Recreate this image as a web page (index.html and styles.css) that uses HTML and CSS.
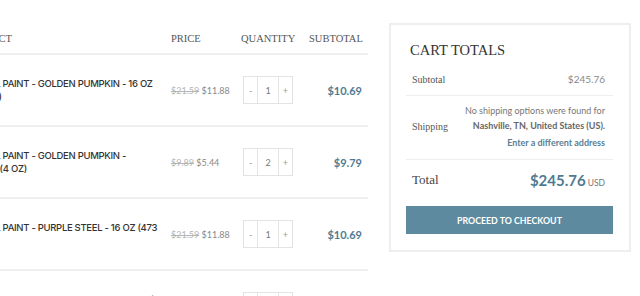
FILE: index.html
```html
<!DOCTYPE html>
<html lang="en">
<head>
    <meta charset="UTF-8">
    <meta name="viewport" content="width=device-width, initial-scale=1.0">
    <title>Cart</title>
    <link rel="stylesheet" href="styles.css">
</head>
<body>
    <div class="page">
        <!-- Cart items -->
        <div class="cart">
            <div class="cart-row cart-head">
                <div>Product</div>
                <div>Price</div>
                <div>Quantity</div>
                <div class="right">Subtotal</div>
            </div>

            <div class="cart-row">
                <div class="name">MINERAL PAINT - GOLDEN PUMPKIN - 16 OZ<br>(473 ML)</div>
                <div class="price"><del>$21.59</del> $11.88</div>
                <div><div class="qty"><span>-</span><span class="num">1</span><span>+</span></div></div>
                <div class="sub right">$10.69</div>
            </div>

            <div class="cart-row">
                <div class="name">MINERAL PAINT - GOLDEN PUMPKIN -<br>TESTER (4 OZ)</div>
                <div class="price"><del>$9.89</del> $5.44</div>
                <div><div class="qty"><span>-</span><span class="num">2</span><span>+</span></div></div>
                <div class="sub right">$9.79</div>
            </div>

            <div class="cart-row">
                <div class="name">MINERAL PAINT - PURPLE STEEL - 16 OZ (473<br>ML)</div>
                <div class="price"><del>$21.59</del> $11.88</div>
                <div><div class="qty"><span>-</span><span class="num">1</span><span>+</span></div></div>
                <div class="sub right">$10.69</div>
            </div>

            <div class="cart-row">
                <div class="name">MINERAL PAINT - PURPLE STEEL - SAMPLE (4<br>OZ)</div>
                <div class="price"><del>$9.89</del> $5.44</div>
                <div><div class="qty"><span>-</span><span class="num">1</span><span>+</span></div></div>
                <div class="sub right">$5.44</div>
            </div>
        </div>

        <!-- Cart totals -->
        <div class="totals">
            <h2>Cart Totals</h2>
            <div class="t-row">
                <div class="label">Subtotal</div>
                <div class="value">$245.76</div>
            </div>
            <div class="t-row shipping">
                <div class="label">Shipping</div>
                <div class="value">
                    <div>No shipping options were found for</div>
                    <div><strong>Nashville, TN, United States (US).</strong></div>
                    <a href="#" class="change">Enter a different address</a>
                </div>
            </div>
            <div class="t-row total">
                <div class="label">Total</div>
                <div class="value"><span class="amount">$245.76</span><span class="cur">USD</span></div>
            </div>
            <button class="checkout">Proceed to checkout</button>
        </div>
    </div>
</body>
</html>
```

FILE: styles.css
```css
body {
    margin: 0;
    background-color: #fff;
    font-family: Lato, Arial, sans-serif;
    color: #555;
    overflow: hidden;
}
.page {
    display: flex;
    align-items: flex-start;
}
.cart {
    width: 405px;
    margin-left: -37px;
    flex-shrink: 0;
}
.cart-row {
    display: grid;
    grid-template-columns: 208px 70px 68px 1fr;
    align-items: center;
    height: 70px;
    border-bottom: 2px solid #efefef;
}
.cart-head {
    height: 43px;
    padding-top: 10px;
    align-items: end;
    font-family: "Liberation Serif", serif;
    font-size: 10.5px;
    line-height: 12px;
    text-transform: uppercase;
    color: #555;
}
.cart-head div {
    padding-bottom: 8px;
}
.right {
    text-align: right;
    padding-right: 6px;
}
.name {
    font-family: Inter, sans-serif;
    font-weight: 500;
    font-size: 9.5px;
    letter-spacing: -0.3px;
    line-height: 13px;
    text-indent: -3px;
    color: #333;
    white-space: nowrap;
}
.price {
    font-size: 9px;
    color: #888;
}
.price del {
    color: #b5b5b5;
}
.qty {
    display: flex;
    width: 50px;
    height: 28px;
    margin-left: 2px;
    border: 1px solid #e3e3e3;
    box-sizing: border-box;
    font-size: 9px;
    color: #999;
}
.qty span {
    display: flex;
    align-items: center;
    justify-content: center;
    width: 14px;
}
.qty .num {
    width: 20px;
    border-left: 1px solid #e3e3e3;
    border-right: 1px solid #e3e3e3;
    color: #777;
}
.sub {
    font-size: 11px;
    font-weight: bold;
    color: #4f7b91;
}
.totals {
    width: 242px;
    margin: 23px 0 0 21px;
    padding: 15px 16px 16px 15px;
    border: 2px solid #eeeeee;
    box-sizing: border-box;
}
.totals h2 {
    margin: 0 0 3px 4px;
    font-family: "Liberation Serif", serif;
    font-weight: normal;
    font-size: 14.5px;
    line-height: 20px;
    text-transform: uppercase;
    color: #333;
}
.t-row {
    display: flex;
    justify-content: space-between;
    align-items: center;
    padding: 10px 8px 10px 6px;
    border-bottom: 1px solid #eee;
}
.label {
    font-family: "Liberation Serif", serif;
    font-size: 10px;
    color: #555;
}
.value {
    font-size: 10px;
    color: #888;
    text-align: right;
}
.shipping {
    padding: 7px 8px 9px 6px;
}
.shipping .value {
    font-size: 9px;
    line-height: 15px;
    color: #777;
}
.shipping strong {
    color: #666;
}
.change {
    display: block;
    margin-top: 2px;
    font-weight: bold;
    color: #5a8093;
    text-decoration: none;
}
.total {
    border-bottom: none;
    padding: 11px 8px 10px 6px;
}
.total .label {
    font-size: 13px;
    color: #444;
}
.amount {
    font-size: 15px;
    font-weight: bold;
    color: #4f7b91;
}
.cur {
    margin-left: 2px;
    font-size: 8.5px;
    color: #777;
}
.checkout {
    display: block;
    width: 100%;
    height: 28px;
    margin-top: 7px;
    border: none;
    background-color: #5d8a9e;
    color: #fff;
    font-family: Lato, Arial, sans-serif;
    font-size: 8.8px;
    font-weight: bold;
    text-transform: uppercase;
    cursor: pointer;
}
```
